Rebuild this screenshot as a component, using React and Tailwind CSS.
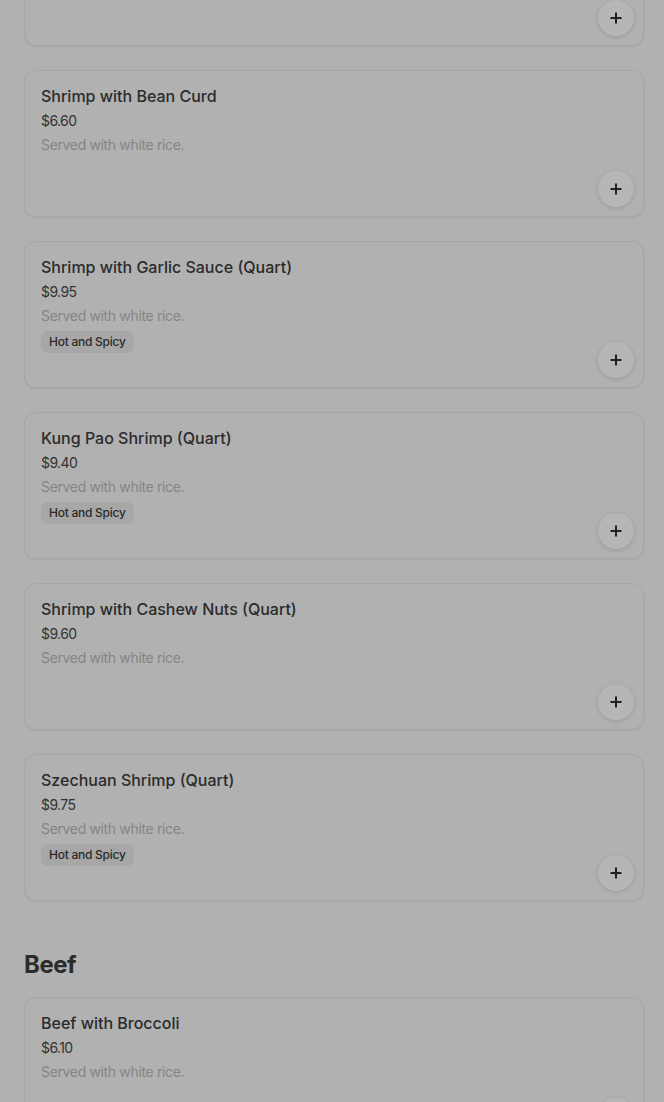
import React from "react";

const items = [
  { name: "Shrimp with Bean Curd", price: "$6.60", spicy: false },
  { name: "Shrimp with Garlic Sauce (Quart)", price: "$9.95", spicy: true },
  { name: "Kung Pao Shrimp (Quart)", price: "$9.40", spicy: true },
  { name: "Shrimp with Cashew Nuts (Quart)", price: "$9.60", spicy: false },
  { name: "Szechuan Shrimp (Quart)", price: "$9.75", spicy: true },
];

const beef = [{ name: "Beef with Broccoli", price: "$6.10", spicy: false }];

function PlusIcon() {
  return (
    <svg width="14" height="14" viewBox="0 0 14 14" fill="none">
      <path d="M7 1.5v11M1.5 7h11" stroke="#1f1f1f" strokeWidth="2" />
    </svg>
  );
}

function AddButton() {
  return (
    <button className="flex h-9 w-9 items-center justify-center rounded-full bg-[#b6b6b6] shadow-[0_1px_4px_rgba(0,0,0,0.14)]">
      <PlusIcon />
    </button>
  );
}

function Card({ item }) {
  return (
    <div className="flex h-[147px] justify-between rounded-[12px] border border-[#a7a7a7] bg-[#b1b1b1] shadow-[0_1px_2px_rgba(0,0,0,0.06)]">
      <div className="flex flex-col pl-4 pt-[15px]">
        <div className="text-[16px] font-medium leading-5 text-[#2b2b2b]">{item.name}</div>
        <div className="mt-[5px] text-[14px] leading-5 tracking-[-0.6px] text-[#333333]">{item.price}</div>
        <div className="mt-[4px] text-[14px] leading-5 tracking-[-0.35px] text-[#858585]">Served with white rice.</div>
        {item.spicy && (
          <div className="mt-[5px] flex">
            <span className="rounded-[7px] bg-[#a7a7a7] px-2 py-[3px] text-[12px] font-medium leading-4 tracking-[-0.25px] text-[#2b2b2b]">
              Hot and Spicy
            </span>
          </div>
        )}
      </div>
      <div className="flex items-end pb-[9px] pr-[9px]">
        <AddButton />
      </div>
    </div>
  );
}

export default function App() {
  return (
    <div className="min-h-[1102px] bg-[#b1b1b1] pl-6 pr-5" style={{ fontFamily: "Inter, 'Noto Sans', sans-serif" }}>
      <div className="flex flex-col gap-6">
        <div className="flex h-[46px] items-end justify-end rounded-b-[12px] border border-t-0 border-[#a7a7a7] bg-[#b1b1b1] pb-[9px] pr-[9px] shadow-[0_1px_2px_rgba(0,0,0,0.06)]">
          <AddButton />
        </div>
        {items.map((it) => (
          <Card key={it.name} item={it} />
        ))}
      </div>
      <h2 className="mt-12 text-[24px] font-bold leading-8 tracking-[-0.5px] text-[#2b2b2b]">Beef</h2>
      <div className="mt-4 flex flex-col gap-6">
        {beef.map((it) => (
          <Card key={it.name} item={it} />
        ))}
      </div>
    </div>
  );
}
